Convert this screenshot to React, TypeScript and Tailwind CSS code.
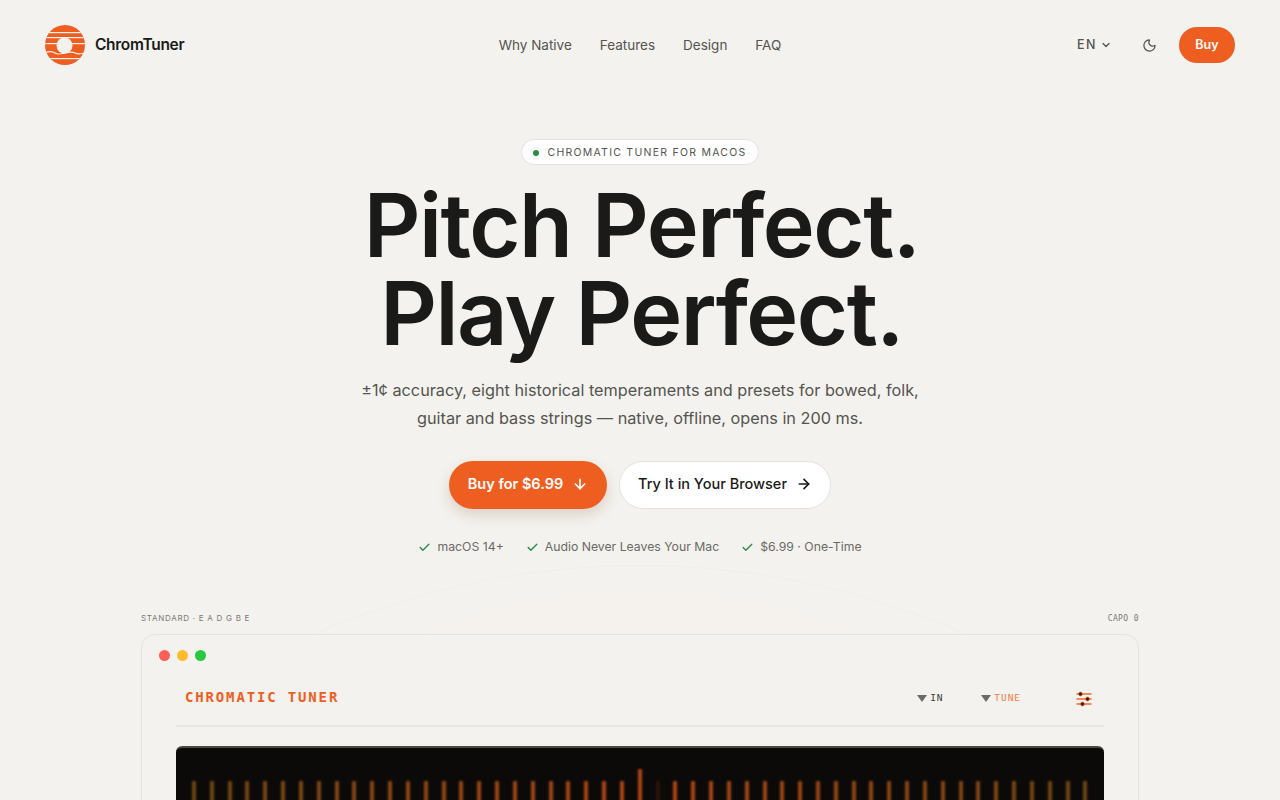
import React from 'react';
import { ArrowDown, ArrowRight, Check, ChevronDown, Moon } from 'lucide-react';

const navLinks = ['Why Native', 'Features', 'Design', 'FAQ'];
const perks = ['macOS 14+', 'Audio Never Leaves Your Mac', '$6.99 · One-Time'];

// 51 meter ticks, amber at the edges and red-orange near the centre
const mix = (i: number) => {
  const d = Math.abs(i - 25) / 25;
  const r = Math.round(176 + (108 - 176) * d);
  const g = Math.round(68 + (70 - 68) * d);
  const b = Math.round(22 + (20 - 22) * d);
  return `rgb(${r},${g},${b})`;
};

const Logo = () => (
  <svg width="40" height="40" viewBox="0 0 40 40">
    <defs>
      <clipPath id="disc">
        <circle cx="20" cy="20" r="20" />
      </clipPath>
    </defs>
    <g clipPath="url(#disc)">
      <rect width="40" height="40" fill="#ee5e20" />
      <g fill="#f3f2ee">
        <rect y="7" width="40" height="1.2" />
        <rect y="12" width="40" height="1.2" />
        <rect y="18" width="40" height="1.2" />
        <rect y="33" width="40" height="1.2" />
      </g>
      <path d="M0 28c4-2 7-2 10 0s6 1 10 0 7-1.500 10 0 6 1 10 0" fill="none" stroke="#f3f2ee" strokeWidth="1.200" />
      <circle cx="19.500" cy="20.500" r="8" fill="#f3f2ee" />
    </g>
  </svg>
);

const SliderIcon = () => (
  <svg width="16" height="16" viewBox="0 0 16 16">
    <g stroke="#ee5e20" strokeWidth="1.400">
      <line x1="0.500" y1="3" x2="15.500" y2="3" />
      <line x1="0.500" y1="8" x2="15.500" y2="8" />
      <line x1="0.500" y1="13" x2="15.500" y2="13" />
    </g>
    <g fill="#2a1a12" stroke="#ee5e20" strokeWidth="0.800">
      <circle cx="4.500" cy="3" r="1.900" />
      <circle cx="11.500" cy="8" r="1.900" />
      <circle cx="6.500" cy="13" r="1.900" />
    </g>
  </svg>
);

const Caret = () => (
  <svg width="10" height="7" viewBox="0 0 10 7" className="shrink-0">
    <path d="M0 0h10L5 7z" fill="#6b6a66" />
  </svg>
);

const App: React.FC = () => {
  return (
    <div className="relative h-screen overflow-hidden bg-[#f3f2ee] font-['Inter',sans-serif] text-[#1a1a18]">
      <div className="absolute left-1/2 top-[565px] h-[1620px] w-[1620px] -translate-x-1/2 rounded-full border border-[#f2efeb] bg-[#f4f2ee]" />
      <div className="absolute left-1/2 top-[590px] h-[1100px] w-[1100px] -translate-x-1/2 rounded-full bg-[#f5f1ed]" />

      <div className="relative">
        <header className="flex h-[90px] items-center justify-between px-[45px]">
          <div className="flex w-[300px] items-center gap-[10px]">
            <Logo />
            <span className="text-[15.500px] font-semibold tracking-[-0.02em]">ChromTuner</span>
          </div>
          <nav className="flex items-center gap-7 text-[13.500px] text-[#55544f]">
            {navLinks.map(link => (
              <a key={link}>{link}</a>
            ))}
          </nav>
          <div className="flex w-[300px] items-center justify-end">
            <div className="flex items-center gap-[3px] text-[12.500px] font-medium tracking-[0.12em] text-[#55544f]">
              EN <ChevronDown size={12} strokeWidth={2.5} />
            </div>
            <Moon size={15} strokeWidth={2} className="ml-[30px] text-[#55544f]" />
            <button className="ml-[22px] h-9 w-14 rounded-full bg-[#ee5e20] text-[12.500px] font-semibold text-white">Buy</button>
          </div>
        </header>

        <main className="flex flex-col items-center">
          <div className="mt-[49px] flex h-[26px] w-[238px] items-center justify-center gap-2 rounded-full border border-[#e4e2dd] bg-white pt-px text-[10.500px] tracking-[0.12em] text-[#55544f]">
            <span className="h-1.5 w-1.5 rounded-full bg-[#2c8a45]" />
            CHROMATIC TUNER FOR MACOS
          </div>

          <h1 className="mt-[16px] pl-[3px] text-center text-[88px] font-semibold leading-[88px] tracking-[-0.017em] text-[#1a1a18]">
            Pitch Perfect.
            <br />
            Play Perfect.
          </h1>

          <p className="mt-[19px] text-center text-[16.250px] leading-7 text-[#55544f]">
            ±1¢ accuracy, eight historical temperaments and presets for bowed, folk,
            <br />
            guitar and bass strings — native, offline, opens in 200 ms.
          </p>

          <div className="mt-[29px] flex items-center gap-3">
            <button className="flex h-12 w-[158px] items-center justify-center gap-[9px] rounded-full bg-[#ee5e20] pb-[2px] text-[14.500px] font-semibold text-white shadow-[0_6px_14px_rgba(120,60,20,0.18)]">
              Buy for $6.99 <ArrowDown size={16} strokeWidth={2.5} />
            </button>
            <button className="flex h-12 w-[212px] items-center justify-center gap-[9px] rounded-full border border-[#e4e2dd] bg-white pb-[2px] text-[14.500px] font-medium text-[#1a1a18]">
              Try It in Your Browser <ArrowRight size={16} strokeWidth={2.5} />
            </button>
          </div>

          <ul className="mt-[29px] flex items-center gap-[22px] text-[12.250px] text-[#6b6a66]">
            {perks.map(perk => (
              <li key={perk} className="flex items-center gap-[6px]">
                <Check size={13} strokeWidth={2.5} className="text-[#2c8a45]" />
                {perk}
              </li>
            ))}
          </ul>

          <section className="mt-[54px] w-[998px]">
            <div className="flex items-center justify-between font-['DejaVu_Sans_Mono',monospace] text-[8px] leading-[17px] tracking-[0.05em] text-[#7b7a75]">
              <span className="font-['Inter',sans-serif] tracking-[0.09em]">STANDARD · E A D G B E</span>
              <span className="slashed-zero">CAPO 0</span>
            </div>
            <div className="mt-[7px] h-[300px] rounded-[14px] border border-[#e6e4df] bg-[#f4f2ee] pt-[15px]">
              <div className="flex gap-[7px] pl-[17px]">
                <span className="h-[11px] w-[11px] rounded-full bg-[#ff5f57]" />
                <span className="h-[11px] w-[11px] rounded-full bg-[#febc2e]" />
                <span className="h-[11px] w-[11px] rounded-full bg-[#28c840]" />
              </div>
              <div className="mx-[34px]">
                <div className="flex h-[66px] items-center border-b-2 border-[#e8e6e1] pt-[8px] font-['DejaVu_Sans_Mono',monospace]">
                  <span className="ml-[9px] text-[14px] font-semibold tracking-[1.850px] text-[#ee5e20]">CHROMATIC TUNER</span>
                  <div className="ml-auto mt-[2px] flex items-center gap-[3px] text-[9.500px] tracking-[0.08em] text-[#3a3a37]">
                    <Caret /> IN
                  </div>
                  <div className="ml-[38px] mt-[2px] flex items-center gap-[3px] text-[9.500px] tracking-[0.1em] text-[#f47a45]">
                    <Caret /> TUNE
                  </div>
                  <div className="ml-[55px] mr-[12px] mt-[3px]">
                    <SliderIcon />
                  </div>
                </div>
                <div className="mt-[19px] h-[200px] rounded-t-[6px] border-t-2 border-[#4a4843] bg-[#0b0a09] px-[16px]">
                  <div className="flex h-[83px] items-end justify-between">
                    {Array.from({ length: 51 }, (_, i) => (
                      <span
                        key={i}
                        className={`w-[4px] rounded-[1px] blur-[1px] ${i === 25 ? 'h-[62px]' : 'h-[50px]'}`}
                        style={{ backgroundColor: i === 26 ? '#2a140a' : mix(i) }}
                      />
                    ))}
                  </div>
                </div>
              </div>
            </div>
          </section>
        </main>
      </div>
    </div>
  );
};

export default App;
